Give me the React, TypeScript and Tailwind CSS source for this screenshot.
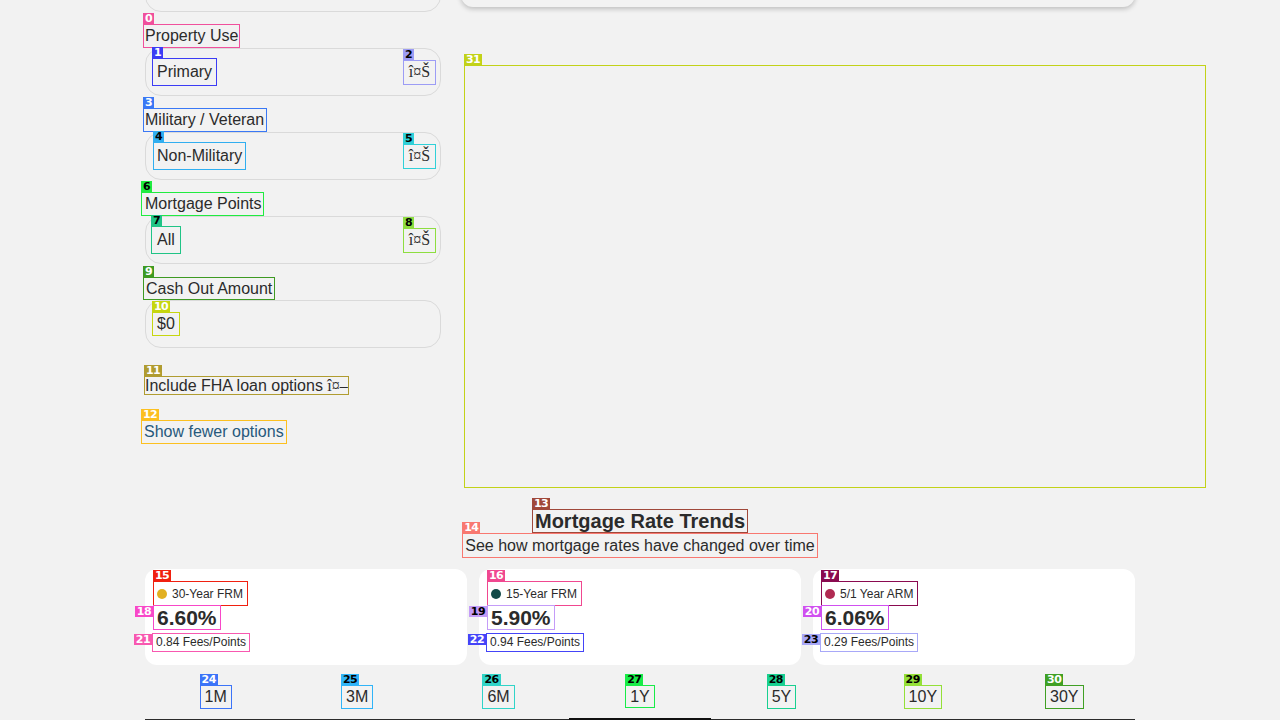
import React from 'react';
import clsx from 'clsx';

type Tone = { o: string; b: string; dark?: boolean };

// overlay marks as they appear on the shot
const tones: Record<number, Tone> = {
  0: { o: 'outline-[#f0509c]', b: 'bg-[#f0509c]' },
  1: { o: 'outline-[#3c3cf5]', b: 'bg-[#3c3cf5]' },
  2: { o: 'outline-[#9c9cf5]', b: 'bg-[#9c9cf5]', dark: true },
  3: { o: 'outline-[#3a78f5]', b: 'bg-[#3a78f5]' },
  4: { o: 'outline-[#30aef0]', b: 'bg-[#30aef0]', dark: true },
  5: { o: 'outline-[#30d0d8]', b: 'bg-[#30d0d8]', dark: true },
  6: { o: 'outline-[#20ec40]', b: 'bg-[#20ec40]', dark: true },
  7: { o: 'outline-[#20c486]', b: 'bg-[#20c486]', dark: true },
  8: { o: 'outline-[#8ede40]', b: 'bg-[#8ede40]', dark: true },
  9: { o: 'outline-[#3e9a22]', b: 'bg-[#3e9a22]' },
  10: { o: 'outline-[#c6d610]', b: 'bg-[#c6d610]' },
  11: { o: 'outline-[#b09c30]', b: 'bg-[#b09c30]' },
  12: { o: 'outline-[#fcc020]', b: 'bg-[#fcc020]' },
  13: { o: 'outline-[#a0483a]', b: 'bg-[#a0483a]' },
  14: { o: 'outline-[#f87870]', b: 'bg-[#f87870]' },
  15: { o: 'outline-[#f02010]', b: 'bg-[#f02010]' },
  16: { o: 'outline-[#f04890]', b: 'bg-[#f04890]' },
  17: { o: 'outline-[#8a0a50]', b: 'bg-[#8a0a50]' },
  18: { o: 'outline-[#f848c8]', b: 'bg-[#f848c8]' },
  19: { o: 'outline-[#c49cf8]', b: 'bg-[#c49cf8]', dark: true },
  20: { o: 'outline-[#d050f0]', b: 'bg-[#d050f0]' },
  21: { o: 'outline-[#f858b0]', b: 'bg-[#f858b0]' },
  22: { o: 'outline-[#4444f8]', b: 'bg-[#4444f8]' },
  23: { o: 'outline-[#a8a8f8]', b: 'bg-[#a8a8f8]', dark: true },
  24: { o: 'outline-[#3c74f8]', b: 'bg-[#3c74f8]' },
  25: { o: 'outline-[#30b4f8]', b: 'bg-[#30b4f8]', dark: true },
  26: { o: 'outline-[#30d4c8]', b: 'bg-[#30d4c8]', dark: true },
  27: { o: 'outline-[#18ec48]', b: 'bg-[#18ec48]', dark: true },
  28: { o: 'outline-[#18d090]', b: 'bg-[#18d090]', dark: true },
  29: { o: 'outline-[#94e038]', b: 'bg-[#94e038]', dark: true },
  30: { o: 'outline-[#40a024]', b: 'bg-[#40a024]' },
  31: { o: 'outline-[#c2d218]', b: 'bg-[#c2d218]' },
};

interface MarkProps {
  n: number;
  side?: 'top' | 'left';
  className?: string;
  children?: React.ReactNode;
}

const Mark: React.FC<MarkProps> = ({ n, side = 'top', className, children }) => {
  const t = tones[n];
  return (
    <div className={clsx('relative outline', t.o, className)}>
      <span
        className={clsx(
          'absolute text-[11px] font-bold leading-[11px] px-[2px] font-["DejaVu_Sans",sans-serif] tracking-tighter',
          side === 'top' ? 'left-[-1px] bottom-full mb-px' : 'right-full top-0 mr-px',
          t.b,
          t.dark ? 'text-black' : 'text-white'
        )}
      >
        {n}
      </span>
      {children}
    </div>
  );
};

const Chevron = ({ n }: { n: number }) => (
  <Mark n={n} className="w-[31px] h-[23px] flex items-center justify-center font-['Liberation_Serif',serif] text-[16px]">
    î¤Š
  </Mark>
);

const fields = [
  { label: 'Property Use', lm: 0, value: 'Primary', vm: 1, cm: 2, pl: 'pl-[7px]', vw: 'px-[4px]', lx: '-ml-px' },
  { label: 'Military / Veteran', lm: 3, value: 'Non-Military', vm: 4, cm: 5, pl: 'pl-[8px]', vw: 'px-[3px]', lx: '-ml-px pr-[2px]' },
  { label: 'Mortgage Points', lm: 6, value: 'All', vm: 7, cm: 8, pl: 'pl-[6px]', vw: 'px-[5px]', lx: '-ml-[3px] pl-[3px]' },
];

const rates = [
  { name: '30-Year FRM', dot: 'bg-[#e2b022]', rate: '6.60%', fees: '0.84 Fees/Points', m: [15, 18, 21] },
  { name: '15-Year FRM', dot: 'bg-[#114a48]', rate: '5.90%', fees: '0.94 Fees/Points', m: [16, 19, 22] },
  { name: '5/1 Year ARM', dot: 'bg-[#b02a52]', rate: '6.06%', fees: '0.29 Fees/Points', m: [17, 20, 23] },
];

const ranges = ['1M', '3M', '6M', '1Y', '5Y', '10Y', '30Y'];

export default function App() {
  return (
    <div className="min-h-screen bg-[#f2f2f2] overflow-hidden font-['Liberation_Sans',Arial,sans-serif] text-[#2b2b2b]">
      <div className="w-[990px] mx-auto">
        <div className="flex gap-5">
          {/* filters */}
          <div className="w-[296px] shrink-0">
            <div className="-mt-[40px] h-[52px] rounded-2xl border border-[#dadada]" />

            {fields.map((f) => (
              <div key={f.label} className="mt-3">
                <div className="h-[24px] flex items-center">
                  <Mark n={f.lm} className={clsx('text-[16px] leading-[22px] px-px', f.lx)}>
                    {f.label}
                  </Mark>
                </div>
                <div className={clsx('h-[48px] rounded-2xl border border-[#dadada] flex items-center justify-between pr-[5px]', f.pl)}>
                  <Mark n={f.vm} className={clsx('text-[16px] leading-[18px] py-[4px]', f.vw)}>
                    {f.value}
                  </Mark>
                  <Chevron n={f.cm} />
                </div>
              </div>
            ))}

            <div className="mt-3">
              <div className="h-[24px] flex items-center">
                <Mark n={9} className="text-[16px] leading-[21px] px-[2px] -ml-px">
                  Cash Out Amount
                </Mark>
              </div>
              <div className="h-[48px] rounded-2xl border border-[#dadada] flex items-center pl-[7px]">
                <Mark n={10} className="text-[16px] leading-[18px] py-[2px] px-[4px]">
                  $0
                </Mark>
              </div>
            </div>

            <div className="mt-[29px] flex">
              <Mark n={11} className="text-[16px] leading-[17px] flex items-center">
                Include FHA loan options&nbsp;
                <span className="font-['Liberation_Serif',serif]">î¤–</span>
              </Mark>
            </div>

            <div className="mt-[27px] flex">
              <Mark n={12} className="text-[16px] leading-[22px] px-[2px] -ml-[3px] text-[#27597c] cursor-pointer">
                Show fewer options
              </Mark>
            </div>
          </div>

          {/* chart */}
          <div className="flex-1 min-w-0">
            <div className="-mt-[40px] h-[47px] rounded-xl bg-[#f2f2f2] shadow-[0_2px_5px_rgba(0,0,0,0.22)]" />
            <Mark n={31} className="mt-[59px] ml-[4px] w-[740px] h-[421px]" />
          </div>
        </div>

        <div className="mt-[23px] flex flex-col items-center">
          <Mark n={13} className="text-[20px] font-bold leading-[22px] px-[2px]">
            Mortgage Rate Trends
          </Mark>
          <Mark n={14} className="mt-[2px] text-[16px] leading-[23px] px-[2px]">
            See how mortgage rates have changed over time
          </Mark>
        </div>

        <div className="mt-3 grid grid-cols-3 gap-3">
          {rates.map((r) => (
            <div key={r.name} className="h-[96px] bg-white rounded-xl pl-[9px] pt-[13px]">
              <div className="flex">
                <Mark n={r.m[0]} className="h-[23px] flex items-center gap-[5px] pl-[3px] pr-[4px] text-[12px]">
                  <span className={clsx('w-[10px] h-[10px] rounded-full', r.dot)} />
                  {r.name}
                </Mark>
              </div>
              <div className="flex mt-px">
                <Mark n={r.m[1]} side="left" className="text-[21px] font-bold leading-[23px] px-[3px]">
                  {r.rate}
                </Mark>
              </div>
              <div className="flex mt-[5px]">
                <Mark n={r.m[2]} side="left" className="text-[12px] leading-[17px] px-[3px] -ml-px">
                  {r.fees}
                </Mark>
              </div>
            </div>
          ))}
        </div>

        <div className="grid grid-cols-7 border-b border-[#2b2b2b]">
          {ranges.map((t, i) => (
            <div
              key={t}
              className={clsx(
                'flex justify-center pt-[21px] pb-[11px]',
                t === '1Y' && 'border-b-[3px] border-[#111] -mb-[2px] pb-[10px]'
              )}
            >
              <Mark n={24 + i} className="text-[16px] leading-[21px] px-[4px]">
                {t}
              </Mark>
            </div>
          ))}
        </div>
      </div>
    </div>
  );
}
